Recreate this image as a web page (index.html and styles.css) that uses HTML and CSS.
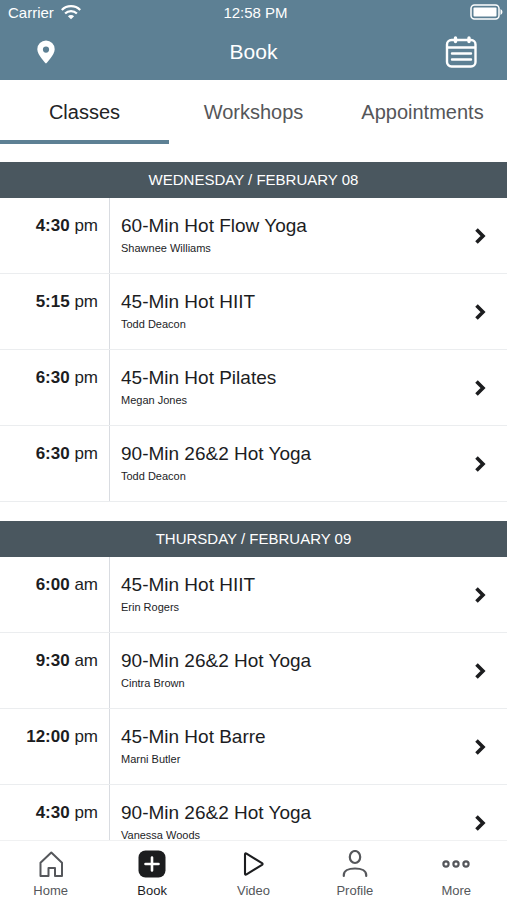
FILE: index.html
```html
<!DOCTYPE html>
<html lang="en">
<head>
<meta charset="utf-8">
<meta name="viewport" content="width=device-width, initial-scale=1">
<title>Book</title>
<link rel="stylesheet" href="styles.css">
</head>
<body>
<svg class="defs" aria-hidden="true">
  <symbol id="chevron" viewBox="0 0 12 18"><path d="M2.500 2.500 9 9l-6.500 6.500" fill="none" stroke="currentColor" stroke-width="3.600"/></symbol>
</svg>
<header class="top">
  <div class="status">
    <span class="carrier">Carrier
      <svg class="wifi" viewBox="0 0 20 16" aria-hidden="true"><g fill="none" stroke="currentColor" stroke-width="2.200"><path d="M.8 6a13 13 0 0 1 18.400 0"/><path d="M4.100 9.500a8.400 8.400 0 0 1 11.800 0"/></g><path d="M6.900 12.200a4.400 4.400 0 0 1 6.200 0L10 15.300z" fill="currentColor"/></svg>
    </span>
    <span>12:58 PM</span>
    <span class="power"><svg class="battery" viewBox="0 0 33 16" aria-hidden="true"><rect x="1" y="1" width="28" height="14" rx="3.500" fill="none" stroke="currentColor" stroke-width="1.500"/><rect x="3.500" y="3.500" width="23" height="9" rx="1" fill="currentColor"/><path d="M30.500 5q2 1 2 3t-2 3z" fill="currentColor"/></svg></span>
  </div>
  <div class="bar">
    <button class="icon-btn" type="button" aria-label="Choose location"><svg class="pin" viewBox="0 0 18 24" aria-hidden="true"><path fill="currentColor" fill-rule="evenodd" d="M9 .5a8.700 8.700 0 0 0-8.700 8.700C.3 15 9 23.500 9 23.500s8.700-8.500 8.700-14.300A8.700 8.700 0 0 0 9 .5zm0 6a3.100 3.100 0 1 1 0 6.200 3.100 3.100 0 0 1 0-6.200z"/></svg></button>
    <h1 class="title">Book</h1>
    <button class="icon-btn" type="button" aria-label="Open calendar"><svg class="calendar" viewBox="0 0 32 32" aria-hidden="true"><g fill="none" stroke="currentColor" stroke-width="2.400" stroke-linecap="round"><rect x="2" y="4" width="28.500" height="26.500" rx="4.500"/><path d="M3 11.500h27M7 17.500h19M7 23.500h19"/><path d="M10.500 2v3.500M24 2v3.500" stroke-width="3.400"/></g></svg></button>
  </div>
</header>
<nav class="tabs" aria-label="Booking type">
  <a class="tab current" href="#classes" aria-current="page">Classes</a>
  <a class="tab" href="#workshops">Workshops</a>
  <a class="tab" href="#appointments">Appointments</a>
</nav>
<main class="schedule" id="classes">
  <section class="day">
    <h2 class="date">WEDNESDAY / FEBRUARY 08</h2>
    <a class="row" href="#c1"><span class="time"><b>4:30</b> pm</span><span class="info"><span class="name">60-Min Hot Flow Yoga</span><span class="teacher">Shawnee Williams</span></span><svg class="chevron" aria-hidden="true"><use href="#chevron"/></svg></a>
    <a class="row" href="#c2"><span class="time"><b>5:15</b> pm</span><span class="info"><span class="name">45-Min Hot HIIT</span><span class="teacher">Todd Deacon</span></span><svg class="chevron" aria-hidden="true"><use href="#chevron"/></svg></a>
    <a class="row" href="#c3"><span class="time"><b>6:30</b> pm</span><span class="info"><span class="name">45-Min Hot Pilates</span><span class="teacher">Megan Jones</span></span><svg class="chevron" aria-hidden="true"><use href="#chevron"/></svg></a>
    <a class="row" href="#c4"><span class="time"><b>6:30</b> pm</span><span class="info"><span class="name">90-Min 26&amp;2 Hot Yoga</span><span class="teacher">Todd Deacon</span></span><svg class="chevron" aria-hidden="true"><use href="#chevron"/></svg></a>
  </section>
  <section class="day">
    <h2 class="date">THURSDAY / FEBRUARY 09</h2>
    <a class="row" href="#c5"><span class="time"><b>6:00</b> am</span><span class="info"><span class="name">45-Min Hot HIIT</span><span class="teacher">Erin Rogers</span></span><svg class="chevron" aria-hidden="true"><use href="#chevron"/></svg></a>
    <a class="row" href="#c6"><span class="time"><b>9:30</b> am</span><span class="info"><span class="name">90-Min 26&amp;2 Hot Yoga</span><span class="teacher">Cintra Brown</span></span><svg class="chevron" aria-hidden="true"><use href="#chevron"/></svg></a>
    <a class="row" href="#c7"><span class="time"><b>12:00</b> pm</span><span class="info"><span class="name">45-Min Hot Barre</span><span class="teacher">Marni Butler</span></span><svg class="chevron" aria-hidden="true"><use href="#chevron"/></svg></a>
    <a class="row" href="#c8"><span class="time"><b>4:30</b> pm</span><span class="info"><span class="name">90-Min 26&amp;2 Hot Yoga</span><span class="teacher">Vanessa Woods</span></span><svg class="chevron" aria-hidden="true"><use href="#chevron"/></svg></a>
  </section>
</main>
<nav class="dock" aria-label="Main">
  <a class="dock-item" href="#home"><svg class="dock-icon" viewBox="0 0 28 28" aria-hidden="true"><path d="M3.500 12.800 14.300 2.500l10.700 10.300V26h-7v-8h-6.500v8h-8z" fill="none" stroke="currentColor" stroke-width="2" stroke-linejoin="round"/></svg>Home</a>
  <a class="dock-item current" href="#book" aria-current="page"><svg class="dock-icon" viewBox="0 0 28 28" aria-hidden="true"><rect x=".5" y=".5" width="27" height="27" rx="7" fill="currentColor"/><path d="M14 7.500v13M7.500 14h13" stroke="#fff" stroke-width="2.600" stroke-linecap="round"/></svg>Book</a>
  <a class="dock-item" href="#video"><svg class="dock-icon dark" viewBox="0 0 28 28" aria-hidden="true"><path d="M6 4.500v19q0 1.700 1.500.8l15.500-9.500q1.200-.8 0-1.600L7.500 3.700Q6 2.800 6 4.500z" fill="none" stroke="currentColor" stroke-width="2.100" stroke-linejoin="round"/></svg>Video</a>
  <a class="dock-item" href="#profile"><svg class="dock-icon" viewBox="0 0 28 28" aria-hidden="true"><g fill="none" stroke="currentColor" stroke-width="2.200" stroke-linecap="round"><ellipse cx="14" cy="7" rx="5.200" ry="6"/><path d="M2.800 26v-1c0-4 4.500-6.500 11.200-6.500s11.200 2.500 11.200 6.500v1"/></g></svg>Profile</a>
  <a class="dock-item" href="#more"><svg class="dock-icon" viewBox="0 0 28 28" aria-hidden="true"><g fill="none" stroke="currentColor" stroke-width="2.200"><circle cx="4" cy="14" r="2.600"/><circle cx="14" cy="14" r="2.600"/><circle cx="24" cy="14" r="2.600"/></g></svg>More</a>
</nav>
</body>
</html>
```
FILE: styles.css
```css
* { box-sizing: border-box; }

body {
  margin: 0;
  height: 100vh;
  display: flex;
  flex-direction: column;
  background: #fff;
  color: #1c1d1f;
  font-family: "Liberation Sans", Arial, sans-serif;
}

a { color: inherit; text-decoration: none; }
svg { display: block; flex: none; }
.defs { position: absolute; width: 0; height: 0; }

.top { background: #5d8094; color: #fff; }

.status {
  display: grid;
  grid-template-columns: 1fr auto 1fr;
  align-items: center;
  height: 24px;
  padding: 0 4px 0 8px;
  font-size: 15px;
}
.carrier { display: flex; align-items: center; gap: 7px; }
.power { display: flex; justify-content: flex-end; }
.wifi { width: 20px; height: 16px; }
.battery { width: 33px; height: 16px; }

.bar {
  display: grid;
  grid-template-columns: 60px 1fr 60px;
  align-items: center;
  height: 56px;
  padding: 0 16px;
}
.title { margin: 0; text-align: center; font-size: 21px; font-weight: 400; line-height: 24px; }
.icon-btn {
  display: flex;
  align-items: center;
  justify-content: center;
  height: 48px;
  padding: 0;
  border: 0;
  background: none;
  color: inherit;
}
.pin { width: 18px; height: 24px; }
.calendar { width: 32px; height: 32px; }

.tabs { display: grid; grid-template-columns: repeat(3, 1fr); height: 64px; flex: none; }
.tab {
  display: flex;
  align-items: center;
  justify-content: center;
  border-bottom: 4px solid transparent;
  padding-top: 4px;
  color: #555659;
  font-size: 20px;
}
.tab.current { border-color: #5d8094; color: #222326; }

.schedule {
  flex: 1;
  min-height: 0;
  overflow-y: auto;
  scrollbar-width: none;
  padding-top: 18px;
}
.day { margin-bottom: 19px; }
.date {
  margin: 0;
  background: #4a575f;
  color: #fff;
  font-size: 15px;
  font-weight: 400;
  line-height: 36px;
  text-align: center;
}
.row {
  display: grid;
  grid-template-columns: 110px 1fr auto;
  height: 76px;
  padding-right: 21px;
  border-bottom: 1px solid #ebedef;
}
.time {
  padding: 16px 11px 0 0;
  border-right: 1px solid #d9dce1;
  font-size: 17px;
  line-height: 24px;
  text-align: right;
}
.info { padding: 16px 0 0 11px; }
.name, .teacher { display: block; }
.name { font-size: 19px; line-height: 24px; }
.teacher { font-size: 11px; line-height: 20px; }
.chevron { width: 12px; height: 18px; align-self: center; }

.dock {
  display: grid;
  grid-template-columns: repeat(5, 1fr);
  flex: none;
  height: 60px;
  border-top: 1px solid #f0f1f2;
  background: #fff;
}
.dock-item {
  display: flex;
  flex-direction: column;
  align-items: center;
  gap: 5px;
  padding-top: 9px;
  color: #55575b;
  font-size: 13px;
  line-height: 16px;
}
.dock-item.current, .dark { color: #1c1d1f; }
.dock-icon { width: 28px; height: 28px; }
```
